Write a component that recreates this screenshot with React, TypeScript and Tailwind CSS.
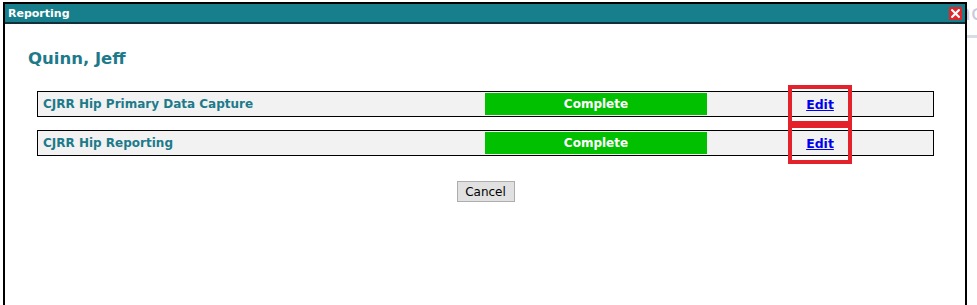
import React from "react";

const TASKS = [
  { name: "CJRR Hip Primary Data Capture", status: "Complete" },
  { name: "CJRR Hip Reporting", status: "Complete" },
];

const font = { fontFamily: "Tahoma, 'DejaVu Sans', Verdana, sans-serif" };

export default function App() {
  return (
    <div className="relative w-[977px] h-[305px] overflow-hidden bg-white" style={font}>
      {/* page peeking out behind the dialog */}
      <div className="flex flex-col items-end pt-[2px]">
        <span className="text-[22px] leading-[22px] text-[#c9c9dd] mr-[-6px]">ac</span>
        <div className="mt-[11px] h-[3px] w-[11px] bg-[#d6dde4]" />
      </div>

      {/* dialog */}
      <div className="absolute left-[3px] top-[2px] w-[964px] h-[310px] flex flex-col border-2 border-black bg-white">
        <div className="flex items-center justify-between h-[20px] bg-[#177e8c] border-b-2 border-[#10303a] pl-[3px] pr-[3px]">
          <span className="text-white font-bold text-[11px] leading-none">Reporting</span>
          <button className="w-[13px] h-[13px] bg-[#e0262b] flex items-center justify-center">
            <svg width="9" height="9" viewBox="0 0 9 9">
              <path d="M1.2 1.2 L7.8 7.8 M7.8 1.2 L1.2 7.8" stroke="white" strokeWidth="2.2" strokeLinecap="square" />
            </svg>
          </button>
        </div>

        <div className="flex flex-col pl-[32px] pr-[31px]">
          <h1 className="ml-[-9px] mt-[24px] text-[16.5px] leading-[22px] font-bold text-[#1d7a8a]">Quinn, Jeff</h1>

          <div className="mt-[21px] flex flex-col gap-[13px]">
            {TASKS.map((t) => (
              <div
                key={t.name}
                className="flex items-center h-[26px] border border-black bg-[#f2f2f2]"
              >
                <span className="w-[447px] pl-[5px] text-[12px] font-bold text-[#1d7a8a]">{t.name}</span>
                <div className="w-[222px] h-[22px] bg-[#00c000] flex items-center justify-center text-white font-bold text-[12px]">
                  {t.status}
                </div>
                <div className="w-[226px] flex justify-center">
                  <span className="relative">
                    <a href="#" className="text-[#0000ee] underline font-bold text-[12.5px]">Edit</a>
                    <span className="absolute left-[-18px] right-[-18px] top-[-7px] bottom-[-9px] border-[4px] border-[#e3222b]" />
                  </span>
                </div>
              </div>
            ))}
          </div>

          <div className="mt-[25px] flex justify-center">
            <button className="w-[58px] h-[21px] bg-[#e1e1e1] border border-[#adadad] text-[12px] text-black">
              Cancel
            </button>
          </div>
        </div>
      </div>
    </div>
  );
}
